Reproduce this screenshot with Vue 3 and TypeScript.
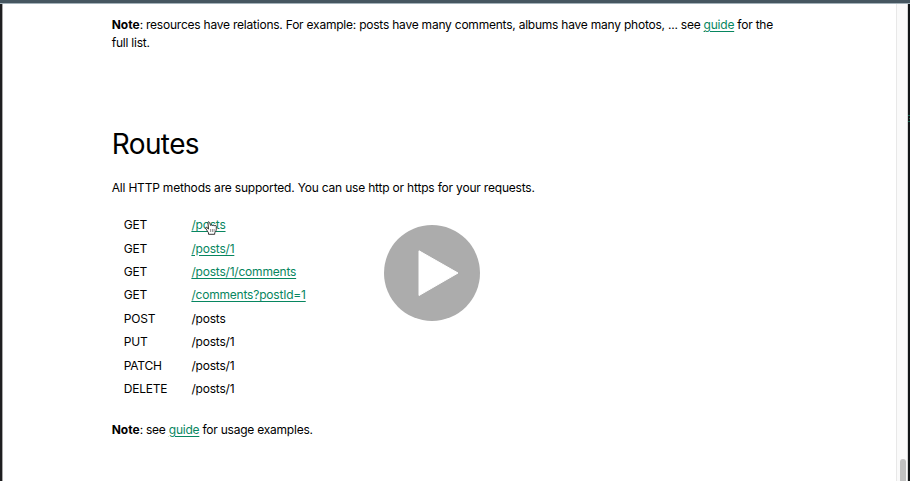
<script setup lang="ts">
interface Route {
  method: string
  path: string
  linked: boolean
}

const routes: Route[] = [
  { method: 'GET', path: '/posts', linked: true },
  { method: 'GET', path: '/posts/1', linked: true },
  { method: 'GET', path: '/posts/1/comments', linked: true },
  { method: 'GET', path: '/comments?postId=1', linked: true },
  { method: 'POST', path: '/posts', linked: false },
  { method: 'PUT', path: '/posts/1', linked: false },
  { method: 'PATCH', path: '/posts/1', linked: false },
  { method: 'DELETE', path: '/posts/1', linked: false },
]
</script>

<template>
  <div class="frame">
    <div class="topbar"></div>
    <div class="body">
      <main class="content">
        <p class="intro">
          <b>Note</b>: resources have relations. For example: posts have many comments, albums have many photos, ... see
          <a href="#">guide</a> for the<br />full list.
        </p>
        <h2>Routes</h2>
        <p class="lead">All HTTP methods are supported. You can use http or https for your requests.</p>
        <table>
          <tbody>
            <tr v-for="route in routes" :key="route.method + route.path">
              <td class="method">{{ route.method }}</td>
              <td>
                <a v-if="route.linked" href="#">{{ route.path }}</a>
                <template v-else>{{ route.path }}</template>
              </td>
            </tr>
          </tbody>
        </table>
        <p class="usage"><b>Note</b>: see <a href="#">guide</a> for usage examples.</p>
      </main>
      <div class="scrollbar"><div class="thumb"></div></div>
    </div>
    <svg class="cursor" viewBox="0 0 12 14" width="12" height="14" aria-hidden="true">
      <path
        d="M3.5 8.2 2.1 6.6C1.3 5.8.2 6.6.8 7.6L3.5 11.8V13.3H9.7V11.9C10.8 10.4 11.3 9.4 11.3 7.8V5.4C11.3 4.3 9.9 4.3 9.6 5.1 9.4 3.9 7.9 3.9 7.6 4.8 7.2 3.7 5.9 3.8 5.6 4.5L4.6 1.5C4.2.3 2.7.7 3 1.9Z"
        fill="#fff" stroke="#222" stroke-width=".9" stroke-linejoin="round"
      />
      <path d="M5.6 8v3M7.4 8v3M9.1 8v3" stroke="#444" stroke-width=".6" />
    </svg>
    <button class="play" aria-label="Play">
      <svg viewBox="0 0 96 96" width="96" height="96">
        <circle cx="48" cy="48" r="48" fill="#acacac" />
        <path d="M35 25.8 74 48 35 70.5Z" fill="#fff" stroke="#fff" stroke-width="1" stroke-linejoin="round" />
      </svg>
    </button>
    <svg class="edge-marks" viewBox="0 0 2 8" width="2" height="8" aria-hidden="true">
      <path d="M0 .5h2M1 3.5h1M0 6.5h2" stroke="#17614d" />
    </svg>
  </div>
</template>

<style>
body {
  margin: 0;
  overflow: hidden;
}
</style>

<style scoped>
.frame {
  position: relative;
  display: flex;
  flex-direction: column;
  box-sizing: border-box;
  width: 910px;
  height: 481px;
  overflow: hidden;
  background: #fff;
  color: #000;
  font-family: Inter, sans-serif;
  font-size: 12px;
  line-height: 18px;
  letter-spacing: -0.2px;
}
.topbar {
  flex: none;
  height: 3px;
  background: #465660;
  border-bottom: 1px solid #a4b2ba;
}
.body {
  display: flex;
  flex: 1;
  min-height: 0;
  border-left: 2px solid #1e1e20;
  border-right: 2px solid #111416;
  box-shadow: inset 1px 0 #a9a9a9;
}
.content {
  flex: 1;
  padding: 12px 0 0 109.7px;
  white-space: nowrap;
}
p,
h2 {
  margin: 0;
}
a {
  color: #078660;
  text-decoration: underline;
  text-underline-offset: 1.5px;
}
b {
  letter-spacing: 0;
}
.intro {
  letter-spacing: -0.225px;
}
h2 {
  margin-top: 74px;
  font-size: 28px;
  font-weight: 400;
  line-height: 36px;
  letter-spacing: -0.6px;
}
.lead {
  margin-top: 17px;
  letter-spacing: -0.193px;
}
table {
  margin-top: 16.5px;
  border-collapse: collapse;
}
tr {
  height: 23.4px;
}
td {
  padding: 0;
}
.method {
  width: 67.7px;
  padding-left: 12px;
}
.usage {
  margin-top: 20px;
  letter-spacing: -0.23px;
}
.scrollbar {
  display: flex;
  flex-direction: column;
  justify-content: flex-end;
  align-items: center;
  box-sizing: border-box;
  width: 12px;
  padding-left: 1px;
  background: #fafafa;
  border-left: 1px solid #e8e8e8;
  border-right: 1px solid #d5d5d5;
}
.thumb {
  width: 6px;
  height: 22px;
  border-radius: 3px 3px 0 0;
  background: #c1c1c1;
}
.cursor {
  position: absolute;
  left: 205px;
  top: 221px;
}
.play {
  position: absolute;
  left: 384px;
  top: 225px;
  width: 96px;
  height: 96px;
  padding: 0;
  border: 0;
  background: none;
}
.play svg {
  display: block;
}
.edge-marks {
  position: absolute;
  right: 0;
  top: 115px;
}
</style>
